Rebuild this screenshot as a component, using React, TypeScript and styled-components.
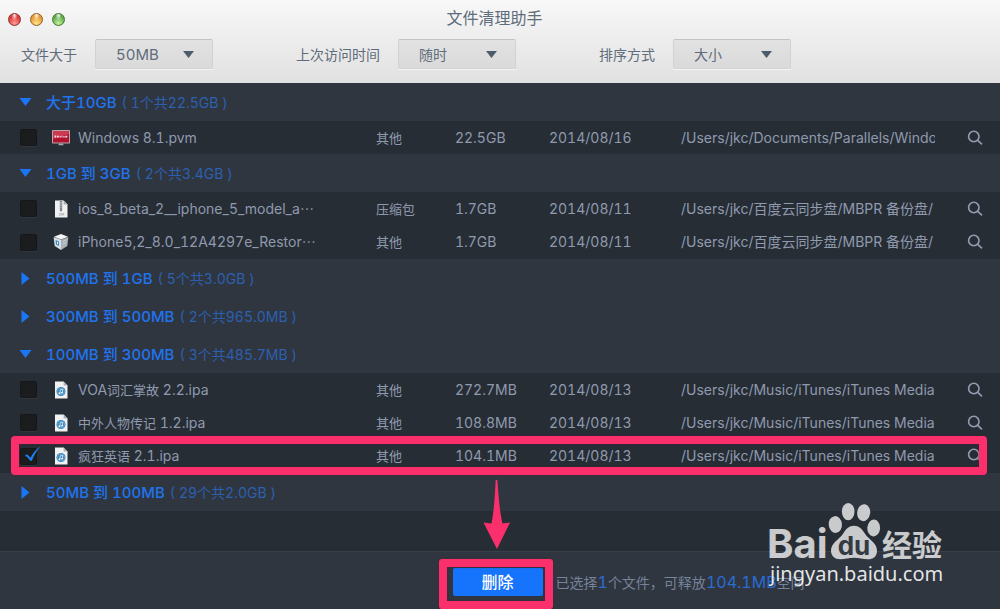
import React, { useState } from 'react';
import styled, { createGlobalStyle } from 'styled-components';

const PINK = '#fb2f6c';

const GlobalStyle = createGlobalStyle`
  * { box-sizing: border-box; }
  body {
    margin: 0;
    background: #272d35;
    font-family: Inter, "Noto Sans CJK SC", sans-serif;
    font-variant-numeric: tabular-nums;
  }
  button, select, input { font: inherit; margin: 0; }
`;

const Window = styled.div`
  position: relative;
  display: flex;
  flex-direction: column;
  min-height: 100vh;
  overflow: hidden;
`;

/* ---------- header ---------- */

const Header = styled.header`
  background: linear-gradient(#f8f8f8, #e1e1e1);
  color: #5f6c7b;
  padding-bottom: 14px;
`;

const TitleBar = styled.div`
  display: grid;
  grid-template-columns: 66px 1fr 77px;
  align-items: center;
  height: 39px;
`;

const Lights = styled.div`
  display: flex;
  gap: 9px;
  padding-left: 8px;
`;

const Light = styled.button<{ $edge: string; $mid: string; $glow: string }>`
  width: 13px;
  height: 13px;
  flex: none;
  padding: 0;
  border: 1px solid ${(p) => p.$edge};
  border-radius: 50%;
  background:
    radial-gradient(ellipse at 50% 12%, rgba(255, 255, 255, 0.9) 0, rgba(255, 255, 255, 0) 38%),
    radial-gradient(circle at 50% 85%, ${(p) => p.$glow}, ${(p) => p.$mid} 65%);
`;

const Title = styled.h1`
  margin: 0;
  padding-bottom: 3px;
  font-size: 16px;
  font-weight: 400;
  line-height: 36px;
  text-align: center;
`;

const Filters = styled.div`
  display: flex;
  align-items: center;
  gap: 83px;
  padding-left: 21px;
`;

const Filter = styled.label`
  display: flex;
  align-items: center;
  gap: 18px;
  font-size: 14px;
  line-height: 30px;
  white-space: nowrap;
`;

const FilterName = styled.span`
  padding-top: 2px;
  line-height: 28px;
`;

const SelectBox = styled.span`
  display: grid;
  grid-template-columns: 118px;
  align-items: center;
`;

const Select = styled.select<{ $latin?: boolean }>`
  grid-area: 1 / 1;
  appearance: none;
  width: 100%;
  height: 30px;
  padding: 0 30px 0 20px;
  border: 1px solid #d2d2d2;
  border-top-color: #c2c4c5;
  border-radius: 2px;
  background: linear-gradient(#e2e2e2, #dadada);
  box-shadow: 0 1px 0 #f6f6f6;
  color: #5f6c7b;
  font-size: ${(p) => (p.$latin ? 15 : 14)}px;
`;

const SelectArrow = styled.svg`
  grid-area: 1 / 1;
  justify-self: end;
  margin-right: 19px;
  fill: #4d5b6c;
  pointer-events: none;
`;

/* ---------- file list ---------- */

const List = styled.main`
  flex: 1;
  background: #272d35;
`;

const Table = styled.table`
  width: 100%;
  table-layout: fixed;
  border-collapse: collapse;
  color: #8f9aae;
  font-size: 14px;
`;

const Col = styled.col<{ $w?: number }>`
  width: ${(p) => (p.$w ? `${p.$w}px` : 'auto')};
`;

const GroupCell = styled.th`
  height: 38px;
  padding: 0;
  background: #2f3640;
  font-weight: 400;
  text-align: left;
`;

const GroupButton = styled.button`
  display: flex;
  align-items: center;
  width: 100%;
  height: 38px;
  padding: 1px 0 0 19px;
  border: 0;
  background: none;
  color: #1f74ee;
  font-size: 15px;
  line-height: 20px;
  white-space: pre;
`;

const Triangle = styled.svg`
  flex: none;
  width: 14px;
  height: 14px;
  margin-right: 13px;
  fill: #1a76f5;
`;

const GroupName = styled.span`
  font-weight: 500;
`;

const GroupSummary = styled.span`
  margin-left: 5px;
  color: #2c60b0;
  font-size: 14px;
`;

const Row = styled.tr<{ $closing?: boolean }>`
  position: relative;
  height: ${(p) => (p.$closing ? 34 : 33)}px;
`;

const Cell = styled.td`
  padding: 0;
  overflow: hidden;
  line-height: 20px;
  white-space: nowrap;
`;

const Han = styled.span`
  font-size: 13px;
`;

const Dots = styled.span`
  font-family: "Noto Sans CJK JP", "Noto Sans CJK SC", sans-serif;
  line-height: 1;
`;

const CheckCell = styled(Cell)`
  overflow: visible;
  padding-left: 20px;
`;

const CheckBox = styled.span`
  position: relative;
  display: block;
  width: 17px;
  height: 17px;
`;

const Check = styled.input`
  appearance: none;
  display: block;
  width: 17px;
  height: 17px;
  border: 1px solid #15171a;
  border-radius: 2px;
  background: #1a1c1e;
  box-shadow: 0 1px 0 #30373f;
`;

const Tick = styled.svg`
  position: absolute;
  top: -2px;
  left: 4px;
  pointer-events: none;
`;

const FileLabel = styled.label`
  display: flex;
  align-items: center;
  gap: 8px;
`;

const FileIcon = styled.svg`
  flex: none;
  width: 18px;
  height: 18px;
`;

const SearchCell = styled(Cell)`
  padding-left: 32px;
`;

const SearchButton = styled.button`
  display: block;
  padding: 0;
  border: 0;
  background: none;
  color: #929db0;

  svg { display: block; }
`;

const RowMark = styled.div`
  position: absolute;
  z-index: 2;
  inset: -3px 13px -2px 11px;
  border: 8px solid ${PINK};
  border-radius: 4px;
  box-shadow: 0 0 2px #5a1c36, inset 0 0 2px #5a1c36;
  pointer-events: none;
`;

/* ---------- footer ---------- */

const Footer = styled.footer`
  display: grid;
  grid-template-columns: 1fr 90px 1fr;
  align-items: center;
  gap: 13px;
  height: 58px;
  padding: 2px 5px 0 0;
  border-top: 1px solid #39404a;
  background: #2f3640;
  color: #76839a;
  font-size: 14px;
`;

const DeleteSlot = styled.div`
  grid-column: 2;
  position: relative;
`;

const DeleteButton = styled.button`
  display: block;
  width: 100%;
  height: 28px;
  padding: 0;
  border: 0;
  border-radius: 2px;
  background: #1673fb;
  color: #fff;
  font-size: 16px;
  font-weight: 500;
  line-height: 28px;
`;

const ButtonMark = styled.div`
  position: absolute;
  inset: -9px -10px -13px -14px;
  border: 8px solid ${PINK};
  border-radius: 3px;
  box-shadow: 0 0 2px #5a1c36, inset 0 0 2px #5a1c36;
  pointer-events: none;
`;

const Arrow = styled.svg`
  position: absolute;
  bottom: 47px;
  left: 30px;
  fill: ${PINK};
  pointer-events: none;
`;

const Status = styled.p`
  margin: 0;
  white-space: nowrap;
`;

const Accent = styled.b`
  color: #2a6cd4;
  font-size: 16px;
  font-weight: 400;
`;

const Watermark = styled.svg`
  position: absolute;
  right: 53px;
  bottom: 20px;
  pointer-events: none;
`;

/* ---------- icons ---------- */

type IconKind = 'screen' | 'zip' | 'box' | 'ipa';

const Paper = () => (
  <>
    <path d="M3 0.500h8.600L15.500 4.400V17.500H3z" fill="#f0f2f2" />
    <path d="M11.600 0.500v3.900h3.900z" fill="#a9afb5" />
  </>
);

const Icon = ({ kind }: { kind: IconKind }) => (
  <FileIcon viewBox="0 0 18 18" aria-hidden="true">
    {kind === 'screen' && (
      <>
        <rect x="0" y="1" width="18" height="13.500" rx="0.800" fill="#b9a5ab" />
        <rect x="1" y="2" width="16" height="11.500" fill="#b3122f" />
        <path d="M1 2h16v3L1 10z" fill="#cb3a50" />
        <path d="M2.500 6.600h1.600v1.800H2.500zM4.800 6.800h2v1.600h-2zM7.500 7.200h1.400v1.200H7.500zM9.500 6.800h1v1.600h-1zM11.200 7.200h1.500v1.200h-1.500zM13.300 6.800h2v1.600h-2z" fill="#f6dfe3" />
        <path d="M7 14.500h4l.7 1.700H6.300z" fill="#a8a6aa" />
      </>
    )}
    {kind === 'zip' && (
      <>
        <Paper />
        <rect x="7.500" y="0.500" width="3" height="9.500" fill="#c3c6c9" />
        <path d="M9 1v7" stroke="#555b62" strokeWidth="1.300" strokeDasharray="1 0.700" />
        <rect x="8" y="7.500" width="2" height="4" rx="0.800" fill="#7c8389" />
        <path d="M7 13.400h1.600L7 15.400h1.600M9.600 13.200v2.400M10.700 15.600v-2.200h1.300v1.200h-1.300" fill="none" stroke="#8c9196" strokeWidth="0.500" />
      </>
    )}
    {kind === 'box' && (
      <>
        <path d="M9 1l7 2.700L9 6.600 2 3.700z" fill="#f3f5f6" />
        <path d="M1.600 3.900L9 6.800V17l-6.300-4z" fill="#d9dee2" />
        <path d="M16.400 3.900L9 6.800V17l6.300-4z" fill="#aab1b8" />
        <path d="M3.600 7l3.300 1.500v4.600l-2.900-1.600z" fill="#2b82c9" />
        <path d="M4.800 8.600l1.200.5v2.400l-1-.5z" fill="#e8f2fa" />
        <path d="M11 8.500l3.200-1.500M11 11l3-1.500" stroke="#d3d8dc" strokeWidth="0.800" />
      </>
    )}
    {kind === 'ipa' && (
      <>
        <Paper />
        <circle cx="9" cy="10.500" r="4.500" fill="#2f7fb5" />
        <circle cx="9" cy="10.500" r="3.500" fill="none" stroke="#7db9dc" strokeWidth="0.700" />
        <path d="M8.100 12.200V8.900l2.500-.5v3.300" fill="none" stroke="#f2f8fc" strokeWidth="0.800" />
        <circle cx="7.500" cy="12.200" r="0.900" fill="#f2f8fc" />
        <circle cx="10" cy="11.700" r="0.900" fill="#f2f8fc" />
      </>
    )}
  </FileIcon>
);

const SearchIcon = () => (
  <svg width="16" height="16" viewBox="0 0 16 16" fill="none" stroke="currentColor" strokeWidth="1.600" aria-hidden="true">
    <circle cx="6.800" cy="6.500" r="5.200" />
    <path d="M10.500 10.200L15 14.400" />
  </svg>
);

const BaiduMark = () => (
  <Watermark width="180" height="88" viewBox="0 0 180 88" fill="#fff">
    <g opacity="0.750">
      <text x="0" y="57" fontFamily="Inter, sans-serif" fontWeight="700" fontSize="40">Bai</text>
      <ellipse cx="68.300" cy="23.500" rx="6.600" ry="8.400" transform="rotate(-6 68.300 23.500)" />
      <ellipse cx="81.200" cy="10.700" rx="6.300" ry="8.600" />
      <ellipse cx="96.700" cy="11.700" rx="6.500" ry="8.500" transform="rotate(8 96.700 11.700)" />
      <ellipse cx="106.700" cy="27" rx="6.400" ry="8.400" transform="rotate(4 106.700 27)" />
      <path d="M87 24.700c5 0 8 3 11 8 4 6 12 9 12 17 0 6-4 8.500-9 8.500-5 0-9-1.500-14-1.500S78 58.200 73 58.200c-5 0-9-3.500-9-8.500 0-8 8-11 12-17 3-5 6-8 11-8z" />
      <text x="115" y="55" fontFamily="'Noto Sans CJK SC', sans-serif" fontWeight="700" fontSize="30">经验</text>
    </g>
    <text x="87" y="54" textAnchor="middle" fill="#343a43" fontFamily="Inter, sans-serif" fontWeight="700" fontSize="26">du</text>
    <text x="3" y="80" fillOpacity="0.880" fontFamily="'Noto Sans', sans-serif" fontSize="20">jingyan.baidu.com</text>
  </Watermark>
);

/* ---------- data ---------- */

type FileItem = {
  name: React.ReactNode;
  icon: IconKind;
  type: string;
  size: string;
  date: string;
  path: string;
  checked?: boolean;
};

type Group = { name: string; summary: string; files?: FileItem[] };

const cloudPath = '/Users/jkc/百度云同步盘/MBPR 备份盘/';
const musicPath = '/Users/jkc/Music/iTunes/iTunes Media';

const groups: Group[] = [
  {
    name: '大于10GB',
    summary: '( 1个共22.5GB )',
    files: [
      { name: 'Windows 8.1.pvm', icon: 'screen', type: '其他', size: '22.5GB', date: '2014/08/16', path: '/Users/jkc/Documents/Parallels/Windo' },
    ],
  },
  {
    name: '1GB 到 3GB',
    summary: '( 2个共3.4GB )',
    files: [
      { name: <>ios_8_beta_2__iphone_5_model_a<Dots lang="ja">{'\u2026'}</Dots></>, icon: 'zip', type: '压缩包', size: '1.7GB', date: '2014/08/11', path: cloudPath },
      { name: <>iPhone5,2_8.0_12A4297e_Restor<Dots lang="ja">{'\u2026'}</Dots></>, icon: 'box', type: '其他', size: '1.7GB', date: '2014/08/11', path: cloudPath },
    ],
  },
  { name: '500MB 到 1GB', summary: '( 5个共3.0GB )' },
  { name: '300MB 到 500MB', summary: '( 2个共965.0MB )' },
  {
    name: '100MB 到 300MB',
    summary: '( 3个共485.7MB )',
    files: [
      { name: <>VOA<Han>词汇掌故</Han> 2.2.ipa</>, icon: 'ipa', type: '其他', size: '272.7MB', date: '2014/08/13', path: musicPath },
      { name: <><Han>中外人物传记</Han> 1.2.ipa</>, icon: 'ipa', type: '其他', size: '108.8MB', date: '2014/08/13', path: musicPath },
      { name: <><Han>疯狂英语</Han> 2.1.ipa</>, icon: 'ipa', type: '其他', size: '104.1MB', date: '2014/08/13', path: musicPath, checked: true },
    ],
  },
  { name: '50MB 到 100MB', summary: '( 29个共2.0GB )' },
];

const filters = [
  { label: '文件大于', value: '50MB', latin: true },
  { label: '上次访问时间', value: '随时' },
  { label: '排序方式', value: '大小' },
];

/* ---------- components ---------- */

const FileRow = ({ file, id, closing }: { file: FileItem; id: string; closing: boolean }) => {
  const [checked, setChecked] = useState(Boolean(file.checked));
  return (
    <Row $closing={closing}>
      <CheckCell>
        <CheckBox>
          <Check id={id} type="checkbox" checked={checked} onChange={(e) => setChecked(e.target.checked)} />
          {checked && (
            <Tick width="18" height="18" viewBox="0 0 18 18" fill="#1d80f2" aria-hidden="true">
              <path d="M.800 9.800l2.300-1.600 3.400 3.600C9.200 7 12 3.400 16.500.3 13 4.500 9.900 9.500 7.800 14.800H6.100C4.700 12.400 3 10.800.800 9.800z" />
            </Tick>
          )}
        </CheckBox>
      </CheckCell>
      <Cell>
        <FileLabel htmlFor={id}>
          <Icon kind={file.icon} />
          <span>{file.name}</span>
        </FileLabel>
      </Cell>
      <Cell><Han>{file.type}</Han></Cell>
      <Cell>{file.size}</Cell>
      <Cell>{file.date}</Cell>
      <Cell>{file.path}</Cell>
      <SearchCell>
        <SearchButton type="button" aria-label="查找"><SearchIcon /></SearchButton>
        {file.checked && <RowMark />}
      </SearchCell>
    </Row>
  );
};

export default function App() {
  return (
    <Window>
      <GlobalStyle />
      <Header>
        <TitleBar>
          <Lights>
            <Light $edge="#8f2f2c" $mid="#d93a3a" $glow="#ff9c94" aria-label="关闭" />
            <Light $edge="#91602a" $mid="#e59a31" $glow="#ffe28a" aria-label="最小化" />
            <Light $edge="#3f7530" $mid="#62a94c" $glow="#c4f2a0" aria-label="缩放" />
          </Lights>
          <Title>文件清理助手</Title>
        </TitleBar>
        <Filters>
          {filters.map((f) => (
            <Filter key={f.label}>
              <FilterName>{f.label}</FilterName>
              <SelectBox>
                <Select $latin={f.latin} defaultValue={f.value}>
                  <option>{f.value}</option>
                </Select>
                <SelectArrow width="11" height="7" viewBox="0 0 11 7" aria-hidden="true">
                  <path d="M0 0h11L5.500 7z" />
                </SelectArrow>
              </SelectBox>
            </Filter>
          ))}
        </Filters>
      </Header>
      <List>
        <Table>
          <colgroup>
            <Col $w={52} />
            <Col />
            <Col $w={79} />
            <Col $w={94} />
            <Col $w={132} />
            <Col $w={254} />
            <Col $w={65} />
          </colgroup>
          {groups.map((g, gi) => (
            <tbody key={g.name}>
              <tr>
                <GroupCell colSpan={7} scope="rowgroup">
                  <GroupButton type="button" aria-expanded={Boolean(g.files)}>
                    <Triangle viewBox="0 0 14 14" aria-hidden="true">
                      <path d={g.files ? 'M.500 2h12L6.500 10z' : 'M2.500 0v13l8-6.500z'} />
                    </Triangle>
                    <GroupName>{g.name}</GroupName>
                    <GroupSummary>{g.summary}</GroupSummary>
                  </GroupButton>
                </GroupCell>
              </tr>
              {g.files?.map((f, i, all) => (
                <FileRow key={i} id={`file-${gi}-${i}`} file={f} closing={i > 0 && i === all.length - 1} />
              ))}
            </tbody>
          ))}
        </Table>
      </List>
      <Footer>
        <DeleteSlot>
          <DeleteButton type="button">删除</DeleteButton>
          <ButtonMark />
          <Arrow width="28" height="70" viewBox="0 0 28 70" aria-hidden="true">
            <path d="M12.600 1.500Q13.500 0 14.400 1.500C15.500 16 16.500 32 19.500 44.500L27 43.500 14 70 .500 43.500 8.500 44.500C11 32 12 16 12.600 1.500z" />
          </Arrow>
        </DeleteSlot>
        <Status>已选择<Accent>1</Accent>个文件，可释放<Accent>104.1MB</Accent>空间</Status>
      </Footer>
      <BaiduMark />
    </Window>
  );
}
